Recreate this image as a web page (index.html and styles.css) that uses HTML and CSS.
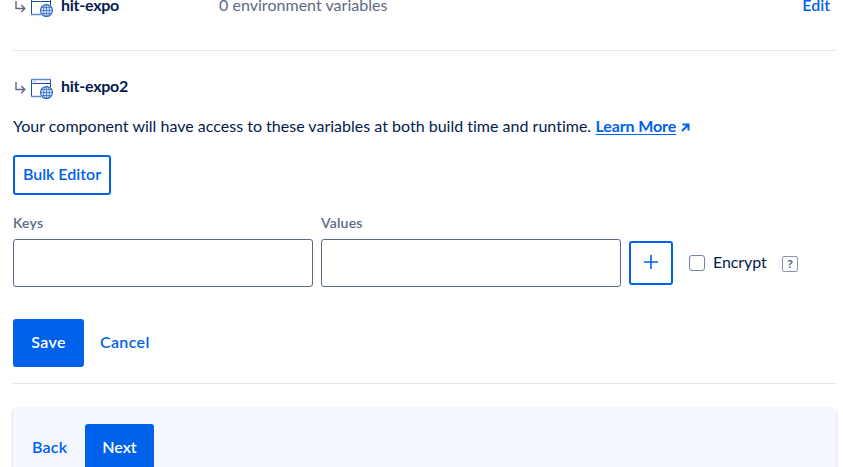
FILE: index.html
```html
<!DOCTYPE html>
<html lang="en">
<head>
<meta charset="utf-8">
<title>Environment Variables</title>
<link rel="stylesheet" href="styles.css">
</head>
<body>
<svg class="defs" width="0" height="0" aria-hidden="true">
  <symbol id="arrow" viewBox="0 0 11 13">
    <path d="M1 0V7.5H9.5M6.3 4L9.8 7.5L6.3 11" fill="none" stroke="#5b6987" stroke-width="1.4"/>
  </symbol>
  <symbol id="site" viewBox="0 0 24 22">
    <path d="M1.5 18.5V1.5M20.5 9V1.5M1 5.5H21" fill="none" stroke="#1b50a0"/>
    <path d="M1 1.5H21M1 18.5H11" stroke="#5f8ccd" stroke-width="1.6"/>
    <path d="M3 3.5H6" stroke="#a5bde2"/>
    <circle cx="16.5" cy="14.5" r="6" fill="#cfe2ff" stroke="#2f66bd" stroke-width="1.1"/>
    <path d="M16.5 8.5V20.5M10.5 14.5H22.5M11.5 11.5H21.5M11.5 17.5H21.5" stroke="#2f66bd" stroke-width=".7"/>
    <ellipse cx="16.5" cy="14.5" rx="3" ry="6" fill="none" stroke="#2f66bd" stroke-width=".7"/>
  </symbol>
</svg>
<main>
  <section class="row">
    <svg class="arrow"><use href="#arrow"/></svg>
    <svg class="site"><use href="#site"/></svg>
    <b class="name first">hit-expo</b>
    <span class="count">0 environment variables</span>
    <a class="edit">Edit</a>
  </section>
  <section class="component">
    <div class="row">
      <svg class="arrow"><use href="#arrow"/></svg>
      <svg class="site"><use href="#site"/></svg>
      <b class="name">hit-expo2</b>
    </div>
    <p class="help"><span class="sentence">Your component will have access to these variables at both build time and runtime.</span><a class="learn">Learn More</a><svg class="out" viewBox="0 0 9 9"><path d="M1 8L7 2M1.5 1.5H7.5V7.5" fill="none" stroke="#0061eb" stroke-width="2"/></svg></p>
    <button class="bulk">Bulk Editor</button>
    <div class="fields">
      <label><span>Keys</span><input type="text"></label>
      <label><span>Values</span><input type="text"></label>
      <button class="add" aria-label="Add"><svg viewBox="0 0 14 14"><path d="M7 0V14M0 7H14" stroke="#0061eb" stroke-width="1.6"/></svg></button>
      <div class="encrypt"><i class="box"></i><span class="enc">Encrypt</span><span class="hint">?</span></div>
    </div>
    <div class="actions"><button class="primary save">Save</button><a class="cancel">Cancel</a></div>
  </section>
  <footer><a class="back">Back</a><button class="primary next">Next</button></footer>
</main>
</body>
</html>
```
FILE: styles.css
```css
* { box-sizing: border-box; }
body {
  margin: 0;
  height: 467px;
  overflow: hidden;
  background: #fff;
  color: #031b4e;
  font: 16px/24px Lato, "Liberation Sans", sans-serif;
  font-variant-ligatures: none;
}
.defs { display: none; }
main { width: 823px; margin-left: 13px; }
a, .bulk { color: #0061eb; font-weight: 600; }
button { font: inherit; font-weight: 600; padding: 0 0 2px; white-space: nowrap; }
.row { display: flex; align-items: center; height: 24px; white-space: nowrap; }
main > .row { height: 51px; border-bottom: 1px solid #e5e8ed; align-items: flex-start; }
main > .row > * { margin-top: -7px; }
.arrow { width: 11px; height: 13px; margin-left: 2px; flex: none; }
.site { width: 24px; height: 22px; margin-left: 4px; flex: none; }
main > .row .arrow { margin-top: 1px; }
main > .row .site { margin-top: -4px; }
.name { font-weight: 700; margin-left: 7px; letter-spacing: -.25px; }
.component .name { padding-bottom: 2px; }
.first { width: 158px; }
.count { color: #5b6987; letter-spacing: .03px; }
.edit { margin-left: auto; margin-right: 6px; }
.component { height: 333px; padding-top: 24px; border-bottom: 1px solid #e5e5e5; }
.component .arrow { margin-top: 2px; }
.component .site { margin-top: 3px; }
.help { display: flex; align-items: center; margin: 15px 0 17px; height: 24px; white-space: nowrap; }
.sentence { width: 582.5px; letter-spacing: .008px; }
.learn { text-decoration: underline; text-underline-offset: 2px; font-weight: 700; letter-spacing: -.12px; width: 81.5px; }
.out { width: 9px; height: 9px; margin: 3px 0 0 4px; flex: none; }
.bulk { display: block; width: 98px; height: 40px; border: 2px solid #0061eb; border-radius: 3px; background: #fff; }
.fields { display: flex; gap: 8px; margin-top: 18px; }
label { width: 300px; color: #5b6987; font-size: 14px; font-weight: 600; line-height: 20px; letter-spacing: .2px; }
label span { display: block; width: max-content; height: 26px; }
input { display: block; width: 300px; height: 48px; border: 1px solid #5b6987; border-radius: 3px; background: #fff; }
.add { display: grid; place-items: center; width: 44px; height: 44px; margin-top: 28px; padding: 0; border: 2px solid #0061eb; border-radius: 3px; background: #fff; }
.add svg { width: 14px; height: 14px; margin-top: -2px; }
.encrypt { display: flex; align-items: center; height: 48px; margin: 26px 0 0 8px; }
.box { width: 16px; height: 16px; border: 1px solid #7784a5; border-radius: 3px; }
.enc { width: 69px; margin-left: 8px; padding-bottom: 2px; letter-spacing: -.1px; }
.hint { width: 16px; height: 16px; margin-top: 2px; border: 1px solid #8b96b0; border-radius: 2px; color: #5b6987; font: 700 11px/14px "Open Sans", sans-serif; text-align: center; }
.actions { display: flex; align-items: center; margin-top: 32px; }
.primary { height: 48px; border: 0; border-radius: 3px; background: #0061eb; color: #fff; }
.save { width: 71px; margin-right: 16px; letter-spacing: .4px; }
.cancel { padding-bottom: 2px; letter-spacing: .35px; }
footer { display: flex; align-items: center; height: 81px; margin: 24px 0 0; padding: 0 19px 2px; border-radius: 4px; background: #f3f7fe; box-shadow: 0 1px 3px rgba(3, 27, 78, .25); }
.back { width: 53px; padding-bottom: 2px; letter-spacing: .2px; }
.next { width: 69px; }
```
